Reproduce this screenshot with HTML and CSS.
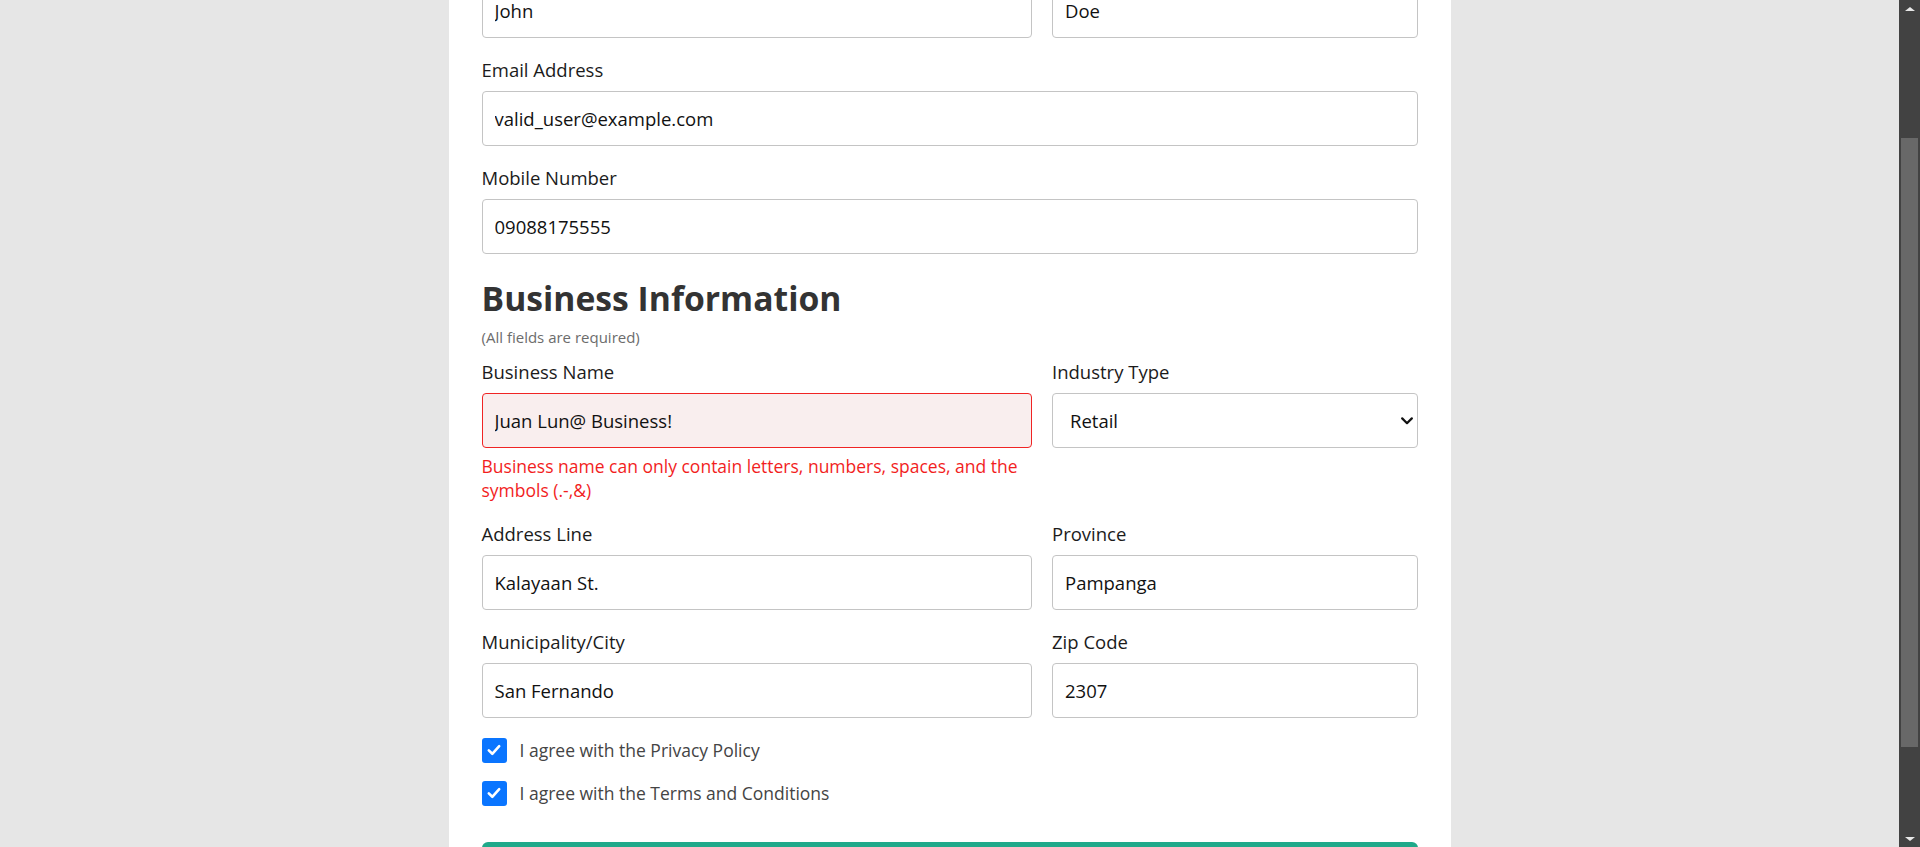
FILE: index.html
```html
<!DOCTYPE html>
<html lang="en">
<head>
<meta charset="utf-8">
<title>Business Registration</title>
<link rel="stylesheet" href="styles.css">
</head>
<body>
<div class="app">
  <div class="viewport" id="viewport">
    <main class="card">
      <h1 class="page-title">Create your account</h1>
      <h2 class="section-title">Personal Information</h2>
      <p class="hint">(All fields are required)</p>
      <div class="grid">
        <div class="field">
          <label class="label" for="first">First Name</label>
          <input class="input" id="first" type="text" value="John">
        </div>
        <div class="field">
          <label class="label" for="last">Last Name</label>
          <input class="input" id="last" type="text" value="Doe">
        </div>
      </div>
      <div class="field">
        <label class="label" for="email">Email Address</label>
        <input class="input" id="email" type="text" value="valid_user@example.com">
      </div>
      <div class="field">
        <label class="label" for="mobile">Mobile Number</label>
        <input class="input" id="mobile" type="text" value="09088175555">
      </div>

      <h2 class="section-title">Business Information</h2>
      <p class="hint hint-business">(All fields are required)</p>
      <div class="grid">
        <div class="field">
          <label class="label" for="bname">Business Name</label>
          <input class="input input-error" id="bname" type="text" value="Juan Lun@ Business!">
          <p class="error">Business name can only contain letters, numbers, spaces, and the symbols (.-,&amp;)</p>
        </div>
        <div class="field">
          <label class="label" for="industry">Industry Type</label>
          <div class="select-wrap">
            <select class="input select" id="industry">
              <option>Retail</option>
              <option>Food &amp; Beverage</option>
              <option>Services</option>
            </select>
            <svg class="chevron" width="12" height="8" viewBox="0 0 12 8" aria-hidden="true"><path d="M1.2 1.4 L6 6.2 L10.8 1.4" fill="none" stroke="#111" stroke-width="2.2" stroke-linecap="round" stroke-linejoin="round"/></svg>
          </div>
        </div>
        <div class="field">
          <label class="label" for="addr">Address Line</label>
          <input class="input" id="addr" type="text" value="Kalayaan St.">
        </div>
        <div class="field">
          <label class="label" for="prov">Province</label>
          <input class="input" id="prov" type="text" value="Pampanga">
        </div>
        <div class="field">
          <label class="label" for="city">Municipality/City</label>
          <input class="input" id="city" type="text" value="San Fernando">
        </div>
        <div class="field">
          <label class="label" for="zip">Zip Code</label>
          <input class="input" id="zip" type="text" value="2307">
        </div>
      </div>

      <div class="checks">
        <div class="check-row">
          <span class="checkbox"><svg width="16" height="16" viewBox="0 0 16 16" aria-hidden="true"><path d="M2.8 8.4 L6.3 11.8 L13.2 4.2" fill="none" stroke="#fff" stroke-width="2.6" stroke-linecap="round" stroke-linejoin="round"/></svg></span>
          <span class="check-label">I agree with the Privacy Policy</span>
        </div>
        <div class="check-row">
          <span class="checkbox"><svg width="16" height="16" viewBox="0 0 16 16" aria-hidden="true"><path d="M2.8 8.4 L6.3 11.8 L13.2 4.2" fill="none" stroke="#fff" stroke-width="2.6" stroke-linecap="round" stroke-linejoin="round"/></svg></span>
          <span class="check-label">I agree with the Terms and Conditions</span>
        </div>
      </div>

      <button class="submit" type="button">Register</button>
    </main>
  </div>
  <div class="scrollbar" aria-hidden="true">
    <div class="sb-btn"><span class="tri-up"></span></div>
    <div class="sb-track"><div class="sb-thumb"></div></div>
    <div class="sb-btn"><span class="tri-down"></span></div>
  </div>
</div>
<script src="script.js"></script>
</body>
</html>
```

FILE: styles.css
```css
html, body {
  margin: 0;
  padding: 0;
  height: 100%;
}

body {
  font-family: "Open Sans", "Noto Sans", sans-serif;
  color: #1b1b1b;
  overflow: hidden;
}

.app {
  display: flex;
  height: 100vh;
}

.viewport {
  flex: 1;
  overflow: hidden;
  background: #e6e6e6;
}

.card {
  width: 1002px;
  box-sizing: border-box;
  margin: 0 auto;
  padding: 30px 33px 60px;
  background: #ffffff;
}

.page-title {
  margin: 0 0 20px;
  font-size: 40px;
  font-weight: 700;
  color: #333;
}

.section-title {
  margin: 24.5px 0 0;
  font-size: 33.7px;
  line-height: 40.8px;
  font-weight: 700;
  color: #333;
}

.hint {
  margin: 7.5px 0 8.5px;
  font-size: 15px;
  line-height: 21px;
  color: #6c6c6c;
}

.hint-business {
  margin-bottom: 10.5px;
}

.grid {
  display: grid;
  grid-template-columns: 550px 1fr;
  column-gap: 20.5px;
}

.field {
  display: flex;
  flex-direction: column;
  margin-bottom: 18.5px;
}

.label {
  font-size: 18.5px;
  line-height: 28px;
  margin-bottom: 6.5px;
  color: #1b1b1b;
}

.input {
  height: 55px;
  box-sizing: border-box;
  border: 1px solid #c4c4c4;
  border-radius: 4px;
  padding: 0 12px;
  font-family: "Open Sans", "Noto Sans", sans-serif;
  font-size: 18.5px;
  color: #111;
  background: #fff;
  outline: none;
  width: 100%;
}

.input-error {
  border-color: #f02424;
  background: #f9eeee;
}

.error {
  margin: 6px 0 0;
  font-size: 17.5px;
  line-height: 24px;
  color: #f21e1e;
}

.select-wrap {
  position: relative;
}

.select {
  appearance: none;
  -webkit-appearance: none;
  padding-left: 17px;
}

.chevron {
  position: absolute;
  right: 5px;
  top: 24px;
}

.checks {
  display: flex;
  flex-direction: column;
  gap: 16px;
  padding-top: 0.5px;
}

.check-row {
  display: flex;
  align-items: center;
  gap: 13px;
  height: 27px;
}

.checkbox {
  width: 25px;
  height: 25px;
  border-radius: 3px;
  background: #0a75ff;
  display: flex;
  align-items: center;
  justify-content: center;
}

.check-label {
  font-size: 17.5px;
  line-height: 27px;
  color: #444;
}

.submit {
  display: block;
  width: 100%;
  height: 56px;
  margin-top: 35.5px;
  border: 0;
  border-radius: 6px;
  background: #1fa98a;
  color: #fff;
  font-family: "Open Sans", "Noto Sans", sans-serif;
  font-size: 18px;
  font-weight: 600;
}

.scrollbar {
  width: 21px;
  flex: none;
  display: flex;
  flex-direction: column;
  background: #424242;
}

.sb-btn {
  height: 17px;
  display: flex;
  align-items: center;
  justify-content: center;
}

.tri-up {
  width: 0;
  height: 0;
  border-left: 5px solid transparent;
  border-right: 5px solid transparent;
  border-bottom: 4px solid #e8e8e8;
}

.tri-down {
  width: 0;
  height: 0;
  border-left: 5px solid transparent;
  border-right: 5px solid transparent;
  border-top: 4px solid #e8e8e8;
}

.sb-track {
  flex: 1;
  padding: 0 2px;
}

.sb-thumb {
  margin-top: 121px;
  height: 609px;
  background: #686868;
}
```

FILE: script.js
```js
(function () {
  var vp = document.getElementById('viewport');
  var anchor = document.getElementById('first');
  var vpTop = vp.getBoundingClientRect().top;
  var bottom = anchor.getBoundingClientRect().bottom - vpTop;
  vp.scrollTop = Math.round(bottom - 38);
})();
```
